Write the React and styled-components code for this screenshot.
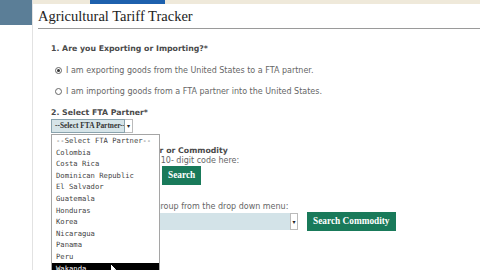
import React from 'react'
import styled, { createGlobalStyle } from 'styled-components'

const GlobalStyle = createGlobalStyle`
  html, body { margin: 0; padding: 0; background: #fff; }
  body { width: 480px; height: 270px; overflow: hidden; }
`;

const partners = [
  '--Select FTA Partner--', 'Colombia', 'Costa Rica', 'Dominican Republic',
  'El Salvador', 'Guatemala', 'Honduras', 'Korea', 'Nicaragua', 'Panama',
  'Peru', 'Wakanda',
];

function Radio({ checked, top, children }) {
  return (
    <RadioRow top={top}>
      <RadioDot checked={checked} />
      <span>{children}</span>
    </RadioRow>
  );
}

function App() {
  return (
    <Page>
      <GlobalStyle />
      <Sidebar>
        <div className='block' />
      </Sidebar>
      <Main>
        <TopStrip>
          <div className='tab' />
        </TopStrip>
        <Title>Agricultural Tariff Tracker</Title>
        <Form>
          <Label top={15}>1. Are you Exporting or Importing?*</Label>
          <Radio checked top={11}>I am exporting goods from the United States to a FTA partner.</Radio>
          <Radio top={11}>I am importing goods from a FTA partner into the United States.</Radio>
          <Label top={12}>2. Select FTA Partner*</Label>
          <SelectWrap>
            <FakeSelect>
              <span className='value'>--Select FTA Partner--</span>
              <span className='arrow'>▾</span>
            </FakeSelect>
            <Menu>
              {partners.map((p, i) => (
                <Option key={p} active={i === partners.length - 1}>{p}</Option>
              ))}
              <Cursor viewBox='0 0 8 12' width='8' height='12'>
                <path d='M0.5 0.5 L0.5 10 L2.8 7.8 L4.4 11.3 L5.8 10.7 L4.3 7.3 L7.3 7.3 Z' fill='#fff' stroke='#000' strokeWidth='1' />
              </Cursor>
            </Menu>
          </SelectWrap>
          <Label top={13}>3. Search by HTS Number or Commodity</Label>
          <Text>Please enter a 4-, 6-, 8-, or 10- digit code here:</Text>
          <Row>
            <Input />
            <Button>Search</Button>
          </Row>
          <Text top={17}>Or, you may also select a group from the drop down menu:</Text>
          <Row>
            <GroupSelect>
              <span className='value'>--Select Group--</span>
              <span className='arrow'>▾</span>
            </GroupSelect>
            <Button>Search Commodity</Button>
          </Row>
        </Form>
      </Main>
    </Page>
  )
}

const Page = styled.div`
  display: flex;
  width: 480px;
  height: 270px;
  overflow: hidden;
  font-family: "DejaVu Sans", Verdana, sans-serif;
`;

const Sidebar = styled.div`
  width: 32px;
  flex-shrink: 0;
  border-right: 1px solid #e2e2e2;
  .block {
    height: 25px;
    background: #5b7e97;
  }
`;

const Main = styled.div`
  flex: 1;
  min-width: 0;
`;

const TopStrip = styled.div`
  height: 4px;
  background: #efe9da;
  .tab {
    margin-left: 57px;
    width: 75px;
    height: 4px;
    background: #1d60ad;
  }
`;

const Title = styled.h1`
  margin: 0 0 0 5px;
  padding: 3px 0 3px 0;
  height: 18px;
  font-family: "Liberation Serif", serif;
  font-weight: normal;
  font-size: 14.5px;
  line-height: 18px;
  color: #222;
  border-bottom: 1px solid #9a9a9a;
`;

const Form = styled.div`
  padding-left: 18px;
`;

const Label = styled.div`
  margin-top: ${p => p.top || 0}px;
  font-size: 7.8px;
  font-weight: bold;
  color: #4a4a4a;
  line-height: 10px;
  white-space: nowrap;
`;

const Text = styled.div`
  margin-top: ${p => p.top || 0}px;
  font-size: 8px;
  color: #666;
  line-height: 10px;
  white-space: nowrap;
`;

const RadioRow = styled.div`
  display: flex;
  align-items: center;
  gap: 4px;
  margin-top: ${p => p.top || 0}px;
  padding-left: 4px;
  height: 10px;
  font-size: 8px;
  color: #666;
  white-space: nowrap;
`;

const RadioDot = styled.span`
  width: 5px;
  height: 5px;
  border: 1px solid #666;
  border-radius: 50%;
  box-sizing: content-box;
  display: flex;
  align-items: center;
  justify-content: center;
  &::after {
    content: '';
    width: 3px;
    height: 3px;
    border-radius: 50%;
    background: ${p => (p.checked ? '#333' : 'transparent')};
  }
`;

const SelectWrap = styled.div`
  position: relative;
  margin-top: 1px;
  width: 82px;
`;

const FakeSelect = styled.div`
  display: flex;
  height: 14px;
  .value {
    width: 74px;
    border: 1px solid #8aa3ad;
    background: #d6e4e8;
    font-family: "Liberation Serif", serif;
    font-weight: bold;
    font-size: 7.4px;
    line-height: 12px;
    color: #333;
    padding-left: 3px;
    box-sizing: border-box;
    white-space: nowrap;
    overflow: hidden;
  }
  .arrow {
    width: 7px;
    border: 1px solid #bbb;
    border-left: none;
    font-size: 6px;
    line-height: 12px;
    text-align: center;
    color: #222;
  }
`;

const Menu = styled.div`
  position: absolute;
  top: 15px;
  left: 0;
  width: 109px;
  height: 137px;
  overflow: hidden;
  background: #fff;
  border: 1px solid #a5a5a5;
  border-bottom: none;
  box-sizing: border-box;
  z-index: 5;
`;

const Option = styled.div`
  height: 11.6px;
  line-height: 11.6px;
  padding-left: 4px;
  font-family: "DejaVu Sans Mono", monospace;
  font-size: 7.2px;
  color: ${p => (p.active ? '#fff' : '#444')};
  background: ${p => (p.active ? '#000' : 'transparent')};
  white-space: nowrap;
`;

const Cursor = styled.svg`
  position: absolute;
  left: 58px;
  top: 128px;
`;

const Row = styled.div`
  display: flex;
  align-items: center;
  gap: 9px;
`;

const Input = styled.div`
  width: 100px;
  height: 17px;
  border: 1px solid #bbb;
`;

const Button = styled.div`
  height: 19px;
  padding: 0 6px;
  background: #197a5a;
  color: #fff;
  font-family: "Liberation Serif", serif;
  font-weight: bold;
  font-size: 9.3px;
  line-height: 19px;
  white-space: nowrap;
`;

const GroupSelect = styled.div`
  display: flex;
  width: 247px;
  height: 17px;
  .value {
    flex: 1;
    background: #d3e3e8;
    font-family: "Liberation Serif", serif;
    font-weight: bold;
    font-size: 8px;
    line-height: 17px;
    color: #333;
    padding-left: 4px;
  }
  .arrow {
    width: 6px;
    border: 1px solid #bbb;
    font-size: 6px;
    line-height: 15px;
    text-align: center;
    color: #222;
  }
`;

export default App
